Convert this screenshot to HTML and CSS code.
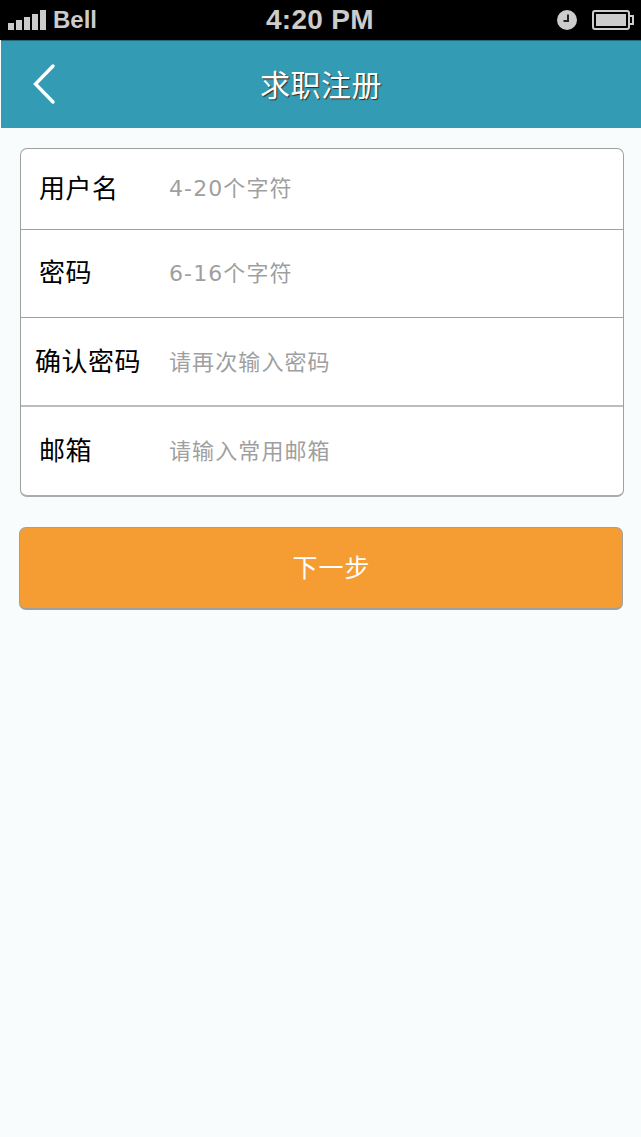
FILE: index.html
```html
<!DOCTYPE html>
<html lang="zh">
<head>
<meta charset="utf-8">
<title>求职注册</title>
<link rel="stylesheet" href="styles.css">
</head>
<body>
<div class="status">
  <div class="status-left">
    <div class="signal"><i class="s1"></i><i class="s2"></i><i class="s3"></i><i class="s4"></i><i class="s5"></i></div>
    <span class="carrier">Bell</span>
  </div>
  <span class="time">4:20 PM</span>
  <div class="status-right">
    <svg class="clock" width="20" height="20" viewBox="0 0 20 20"><circle cx="10" cy="10" r="10" fill="#cccccc"/><path d="M11 4.5V11H6.5" fill="none" stroke="#222" stroke-width="2"/></svg>
    <svg class="battery" width="42" height="20" viewBox="0 0 42 20"><rect x="1" y="1" width="36" height="18" rx="2" fill="none" stroke="#cccccc" stroke-width="2"/><rect x="4" y="4" width="30" height="12" fill="#cccccc"/><path d="M38 6h3v8h-3" fill="none" stroke="#cccccc" stroke-width="2"/></svg>
  </div>
</div>
<header class="nav">
  <svg class="back" width="26" height="42" viewBox="0 0 26 42"><path d="M23 3 5.5 21 23 39" fill="none" stroke="#fff" stroke-width="3.4" stroke-linecap="round" stroke-linejoin="miter"/></svg>
  <h1 class="title">求职注册</h1>
</header>
<main class="content">
  <form class="card">
    <div class="row row-1"><label class="label">用户名</label><span class="hint">4-20个字符</span></div>
    <div class="row row-2"><label class="label">密码</label><span class="hint">6-16个字符</span></div>
    <div class="row row-3"><label class="label label-wide">确认密码</label><span class="hint">请再次输入密码</span></div>
    <div class="row row-4"><label class="label">邮箱</label><span class="hint">请输入常用邮箱</span></div>
  </form>
  <button class="next" type="button">下一步</button>
</main>
</body>
</html>
```
FILE: styles.css
```css
* { box-sizing: border-box; }
html, body { margin: 0; padding: 0; }
body {
  width: 641px;
  height: 1137px;
  overflow: hidden;
  background: #f8fcfd;
  font-family: "DejaVu Sans", "Noto Sans CJK SC", sans-serif;
}
.status {
  height: 40px;
  background: #000;
  color: #cccccc;
  display: flex;
  align-items: center;
  justify-content: space-between;
  padding: 0 7px 0 8px;
  position: relative;
}
.status-left { display: flex; align-items: center; gap: 7px; }
.signal { display: flex; align-items: flex-end; gap: 2px; height: 20px; }
.signal i { display: block; width: 6px; background: #cccccc; }
.s1 { height: 7px; }
.s2 { height: 10px; }
.s3 { height: 13px; }
.s4 { height: 16px; }
.s5 { height: 20px; }
.carrier { font: bold 24px/40px "Liberation Sans", sans-serif; }
.time {
  position: absolute;
  left: 266px;
  top: 0;
  font: bold 28px/40px "Liberation Sans", sans-serif;
  letter-spacing: 0.3px;
}
.status-right { display: flex; align-items: center; gap: 15px; }
.clock, .battery { display: block; }
.nav {
  height: 88px;
  margin-left: 1px;
  background: #339cb4;
  border-top: 1px solid #1e6878;
  display: flex;
  align-items: center;
  justify-content: center;
  position: relative;
}
.back { position: absolute; left: 29px; top: 22px; }
.title {
  margin: 0;
  padding-bottom: 4px;
  font-size: 30px;
  font-weight: 400;
  letter-spacing: 0.5px;
  line-height: 84px;
  color: #fff;
  text-shadow: 1px 1px 1px #3a2a20;
  font-family: "Noto Sans CJK SC", sans-serif;
}
.content {
  padding: 20px 17px 0 19px;
  display: flex;
  flex-direction: column;
  gap: 30px;
}
.card {
  margin-left: 1px;
  width: 604px;
  height: 349px;
  background: #fff;
  border: 1px solid #a0a0a0;
  border-bottom-width: 2px;
  border-bottom-color: #ababab;
  border-radius: 7px;
  display: flex;
  flex-direction: column;
}
.row {
  display: flex;
  align-items: center;
  border-bottom: 1px solid #a0a0a0;
  padding-left: 18px;
  padding-bottom: 6px;
}
.row-1 { height: 81px; }
.row-2 { height: 88px; }
.row-3 { height: 89px; padding-bottom: 4px; border-bottom: 2px solid #bdbdbd; }
.row-4 { flex: 1; border-bottom: 0; padding-bottom: 5px; }
.label {
  width: 130px;
  flex: none;
  font-size: 26px;
  letter-spacing: 0.5px;
  color: #000;
  font-family: "Noto Sans CJK SC", sans-serif;
}
.label-wide { margin-left: -4px; width: 134px; }
.hint {
  font-size: 22px;
  letter-spacing: 1.1px;
  color: #9f9f9f;
}
.next {
  width: 604px;
  height: 83px;
  background: #f59c33;
  border: 1px solid #a0a0a0;
  border-bottom-width: 2px;
  border-radius: 7px;
  color: #fff;
  font-size: 25px;
  letter-spacing: 1px;
  padding: 0 0 5px 21px;
  font-family: "Noto Sans CJK SC", sans-serif;
}
```
